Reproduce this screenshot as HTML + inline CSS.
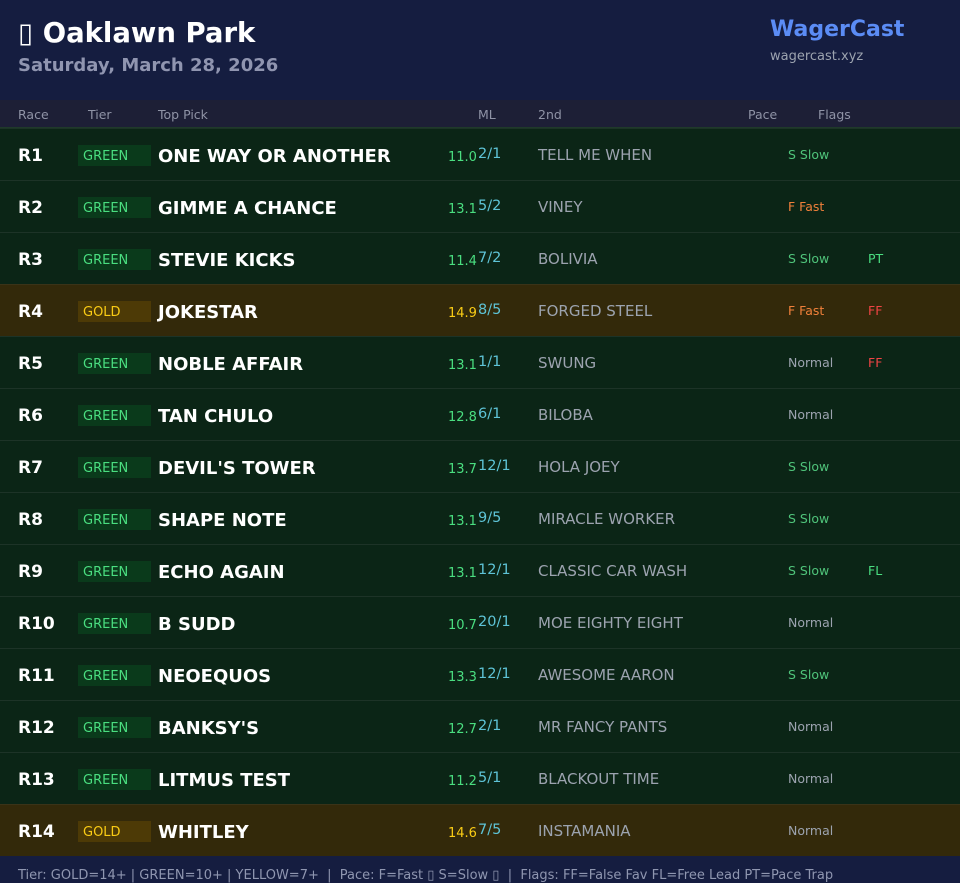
<!DOCTYPE html>
<html><head><meta charset="utf-8"><style>
*{margin:0;padding:0;box-sizing:border-box}
body{width:960px;height:882px;overflow:hidden;background:#151d40;font-family:"DejaVu Sans","Liberation Sans",sans-serif;position:relative}
.hdr{position:absolute;left:0;top:0;width:960px;height:100px;background:#151d40}
.t1{position:absolute;left:18px;top:17px;font-size:27.5px;font-weight:bold;color:#fff}
.t2{position:absolute;left:18px;top:55px;font-size:18px;font-weight:bold;color:#9095b0}
.b1{position:absolute;left:770px;top:17px;font-size:22px;font-weight:bold;color:#5b8cf5}
.b2{position:absolute;left:770px;top:49px;font-size:13px;color:#9ca3af}
.ch{position:absolute;left:0;top:100px;width:960px;height:28px;background:#1d1f36;border-bottom:1px solid #1f3a2a;font-size:12.5px;color:#8f93a6}
.ch span{position:absolute;top:7px}
.row{position:absolute;left:0;width:960px;height:52px;background:#0b2516;border-top:1px solid #1d3327}
.row.g{background:#33290a;border-top-color:#3a3318}
.row span{position:absolute;white-space:nowrap}
.r{left:18px;top:17px;font-size:17px;font-weight:bold;color:#fff}
.bd{left:78px;top:16px;width:73px;height:21px;background:#0a3a1b;color:#4ade80;font-size:13px;padding:4px 0 0 5px}
.g .bd{background:#4d3a06;color:#facc15}
.p{left:158px;top:17px;font-size:18px;font-weight:bold;color:#fff}
.s{left:448px;top:21px;font-size:13px;color:#4ade80}
.g .s{color:#facc15}
.ml{left:478px;top:17px;font-size:14.5px;color:#5ec3d6}
.n{left:538px;top:17px;font-size:15px;color:#9ca3af}
.pc{left:788px;top:18px;font-size:12.5px}
.fl{left:868px;top:18px;font-size:12.5px}
.slow{color:#4fc37a}.fast{color:#f0803a}.norm{color:#9ca3af}.red{color:#ef4444}.grn{color:#4ade80}
.ft{position:absolute;left:0;top:857px;width:960px;height:25px;background:#151d40;color:#8f96b0;font-size:13px;padding:11px 0 0 18px;white-space:nowrap}
</style></head><body>
<div class="hdr">
<div class="t1">▯ Oaklawn Park</div>
<div class="t2">Saturday, March 28, 2026</div>
<div class="b1">WagerCast</div>
<div class="b2">wagercast.xyz</div>
</div>
<div class="ch"><span style="left:18px">Race</span><span style="left:88px">Tier</span><span style="left:158px">Top Pick</span><span style="left:478px">ML</span><span style="left:538px">2nd</span><span style="left:748px">Pace</span><span style="left:818px">Flags</span></div>

<div class="row" style="top:128px"><span class="r">R1</span><span class="bd">GREEN</span><span class="p">ONE WAY OR ANOTHER</span><span class="s">11.0</span><span class="ml">2/1</span><span class="n">TELL ME WHEN</span><span class="pc slow">S Slow</span></div>
<div class="row" style="top:180px"><span class="r">R2</span><span class="bd">GREEN</span><span class="p">GIMME A CHANCE</span><span class="s">13.1</span><span class="ml">5/2</span><span class="n">VINEY</span><span class="pc fast">F Fast</span></div>
<div class="row" style="top:232px"><span class="r">R3</span><span class="bd">GREEN</span><span class="p">STEVIE KICKS</span><span class="s">11.4</span><span class="ml">7/2</span><span class="n">BOLIVIA</span><span class="pc slow">S Slow</span><span class="fl grn">PT</span></div>
<div class="row g" style="top:284px"><span class="r">R4</span><span class="bd">GOLD</span><span class="p">JOKESTAR</span><span class="s">14.9</span><span class="ml">8/5</span><span class="n">FORGED STEEL</span><span class="pc fast">F Fast</span><span class="fl red">FF</span></div>
<div class="row" style="top:336px"><span class="r">R5</span><span class="bd">GREEN</span><span class="p">NOBLE AFFAIR</span><span class="s">13.1</span><span class="ml">1/1</span><span class="n">SWUNG</span><span class="pc norm">Normal</span><span class="fl red">FF</span></div>
<div class="row" style="top:388px"><span class="r">R6</span><span class="bd">GREEN</span><span class="p">TAN CHULO</span><span class="s">12.8</span><span class="ml">6/1</span><span class="n">BILOBA</span><span class="pc norm">Normal</span></div>
<div class="row" style="top:440px"><span class="r">R7</span><span class="bd">GREEN</span><span class="p">DEVIL'S TOWER</span><span class="s">13.7</span><span class="ml">12/1</span><span class="n">HOLA JOEY</span><span class="pc slow">S Slow</span></div>
<div class="row" style="top:492px"><span class="r">R8</span><span class="bd">GREEN</span><span class="p">SHAPE NOTE</span><span class="s">13.1</span><span class="ml">9/5</span><span class="n">MIRACLE WORKER</span><span class="pc slow">S Slow</span></div>
<div class="row" style="top:544px"><span class="r">R9</span><span class="bd">GREEN</span><span class="p">ECHO AGAIN</span><span class="s">13.1</span><span class="ml">12/1</span><span class="n">CLASSIC CAR WASH</span><span class="pc slow">S Slow</span><span class="fl grn">FL</span></div>
<div class="row" style="top:596px"><span class="r">R10</span><span class="bd">GREEN</span><span class="p">B SUDD</span><span class="s">10.7</span><span class="ml">20/1</span><span class="n">MOE EIGHTY EIGHT</span><span class="pc norm">Normal</span></div>
<div class="row" style="top:648px"><span class="r">R11</span><span class="bd">GREEN</span><span class="p">NEOEQUOS</span><span class="s">13.3</span><span class="ml">12/1</span><span class="n">AWESOME AARON</span><span class="pc slow">S Slow</span></div>
<div class="row" style="top:700px"><span class="r">R12</span><span class="bd">GREEN</span><span class="p">BANKSY'S</span><span class="s">12.7</span><span class="ml">2/1</span><span class="n">MR FANCY PANTS</span><span class="pc norm">Normal</span></div>
<div class="row" style="top:752px"><span class="r">R13</span><span class="bd">GREEN</span><span class="p">LITMUS TEST</span><span class="s">11.2</span><span class="ml">5/1</span><span class="n">BLACKOUT TIME</span><span class="pc norm">Normal</span></div>
<div class="row g" style="top:804px"><span class="r">R14</span><span class="bd">GOLD</span><span class="p">WHITLEY</span><span class="s">14.6</span><span class="ml">7/5</span><span class="n">INSTAMANIA</span><span class="pc norm">Normal</span></div>
<div class="ft">Tier: GOLD=14+ | GREEN=10+ | YELLOW=7+ &nbsp;| &nbsp;Pace: F=Fast ▯ S=Slow ▯ &nbsp;| &nbsp;Flags: FF=False Fav FL=Free Lead PT=Pace Trap</div>
</body></html>
